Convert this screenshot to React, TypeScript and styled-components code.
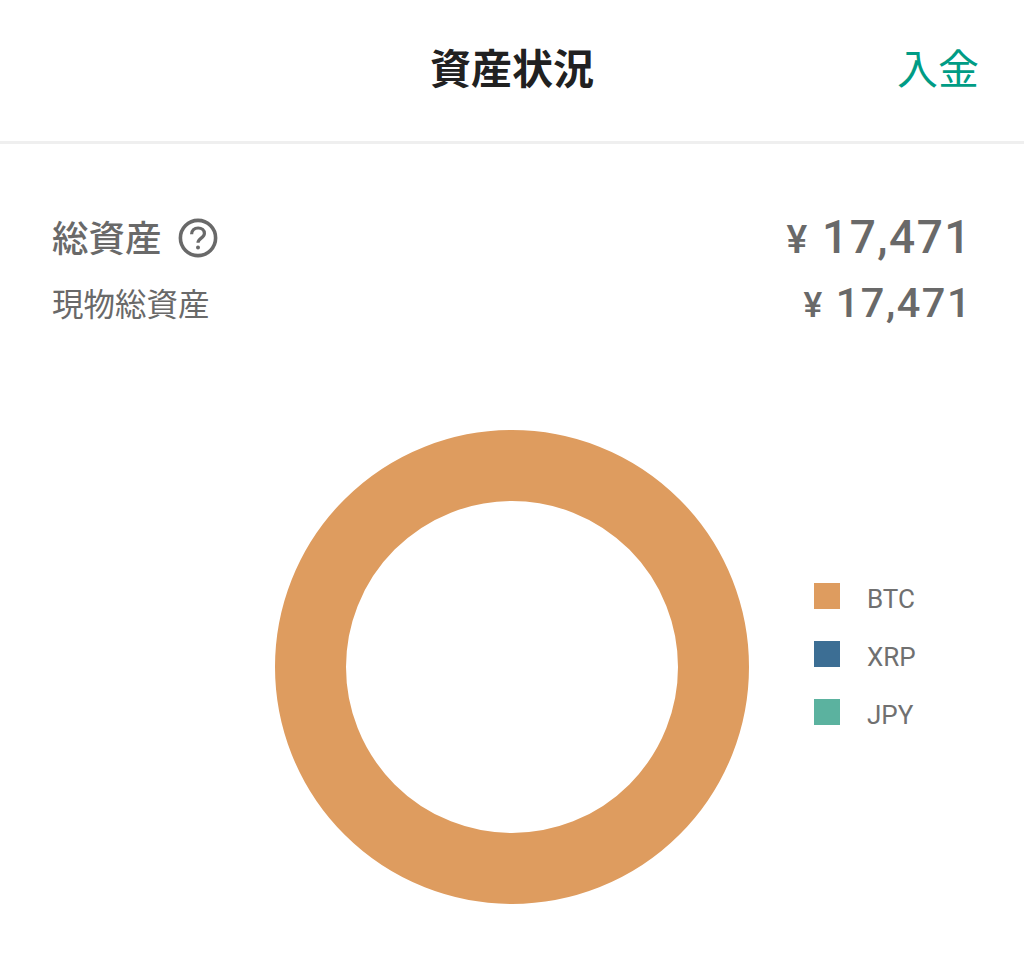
import React from 'react'
import styled, {createGlobalStyle} from 'styled-components'

const GlobalStyle = createGlobalStyle`
  html, body {
    margin: 0;
    padding: 0;
    background: #fff;
  }
  body {
    font-family: Roboto, "Noto Sans CJK JP", sans-serif;
  }
`

const Page = styled.div`
  width: 1024px;
  height: 963px;
  overflow: hidden;
  background: #fff;
`

const Header = styled.header`
  height: 141px;
  display: grid;
  grid-template-columns: 1fr auto 1fr;
  align-items: center;
  border-bottom: 3px solid #efefef;
  padding: 0 45px 0 0;
`

const Title = styled.h1`
  grid-column: 2;
  margin: 0;
  padding-left: 45px;
  font-size: 41px;
  line-height: 1;
  font-weight: 700;
  color: #212121;
`

const HeaderAction = styled.a`
  grid-column: 3;
  justify-self: end;
  font-size: 41px;
  line-height: 1;
  color: #009c85;
`

const Summary = styled.section`
  padding: 69px 52px 0 52px;
`

const SummaryRow = styled.div<{$gap?: number}>`
  display: flex;
  justify-content: space-between;
  align-items: center;
  height: 50px;
  color: #696969;
  margin-top: ${p => p.$gap ?? 0}px;
`

const Label = styled.div<{$size: number; $weight?: number}>`
  display: flex;
  align-items: center;
  gap: 16px;
  font-size: ${p => p.$size}px;
  font-weight: ${p => p.$weight ?? 400};
  line-height: 46px;
`

const LabelText = styled.span<{$drop: number}>`
  padding-top: ${p => p.$drop}px;
`

const Amount = styled.div<{$size: number}>`
  font-family: Roboto, sans-serif;
  font-size: ${p => p.$size}px;
  line-height: 50px;
  font-weight: 500;
  letter-spacing: 1.5px;
`

const Yen = styled.span`
  font-size: 0.85em;
  margin-right: 0.34em;
`

const HelpIcon = styled.svg`
  width: 40px;
  height: 40px;
  display: block;
`

const ChartRow = styled.section`
  display: grid;
  grid-template-columns: 1fr 474px 1fr;
  align-items: center;
  margin-top: 101px;
`

const Donut = styled.svg`
  grid-column: 2;
  width: 474px;
  height: 474px;
  display: block;
`

const Legend = styled.ul`
  grid-column: 3;
  list-style: none;
  margin: 0 0 26px;
  padding: 0 0 0 65px;
  display: flex;
  flex-direction: column;
  gap: 32px;
`

const LegendItem = styled.li`
  display: flex;
  align-items: center;
  gap: 27px;
  height: 26px;
  font-size: 26px;
  line-height: 26px;
  color: #707070;
`

const LegendName = styled.span`
  padding-top: 6px;
`

const Swatch = styled.span<{$color: string}>`
  width: 26px;
  height: 26px;
  background: ${p => p.$color};
`

const coins = [
    {name: 'BTC', color: '#de9c5f'},
    {name: 'XRP', color: '#3c6e94'},
    {name: 'JPY', color: '#5bb29f'},
]

export default function App() {
    return <Page>
        <GlobalStyle/>
        <Header>
            <Title>資産状況</Title>
            <HeaderAction>入金</HeaderAction>
        </Header>
        <Summary>
            <SummaryRow>
                <Label $size={36.5} $weight={500}>
                    <LabelText $drop={3}>総資産</LabelText>
                    <HelpIcon viewBox="0 0 40 40" fill="none" stroke="#696969" strokeWidth="3.6">
                        <circle cx="20" cy="20" r="17.6"/>
                        <path d="M13.6 16.2c0-3.8 2.8-6.2 6.5-6.2s6.3 2.3 6.3 5.4c0 4.6-6.4 4.8-6.4 9.4" strokeWidth="3.2"/>
                        <circle cx="20" cy="29.4" r="2" fill="#696969" stroke="none"/>
                    </HelpIcon>
                </Label>
                <Amount $size={46}><Yen>¥</Yen>17,471</Amount>
            </SummaryRow>
            <SummaryRow $gap={16}>
                <Label $size={31.5}>
                    <LabelText $drop={4}>現物総資産</LabelText>
                </Label>
                <Amount $size={41.5}><Yen>¥</Yen>17,471</Amount>
            </SummaryRow>
        </Summary>
        <ChartRow>
            <Donut viewBox="0 0 474 474">
                <circle cx="237" cy="237" r="201.5" fill="none" stroke="#de9c5f" strokeWidth="71"/>
            </Donut>
            <Legend>
                {coins.map(c => <LegendItem key={c.name}>
                    <Swatch $color={c.color}/>
                    <LegendName>{c.name}</LegendName>
                </LegendItem>)}
            </Legend>
        </ChartRow>
    </Page>
}
